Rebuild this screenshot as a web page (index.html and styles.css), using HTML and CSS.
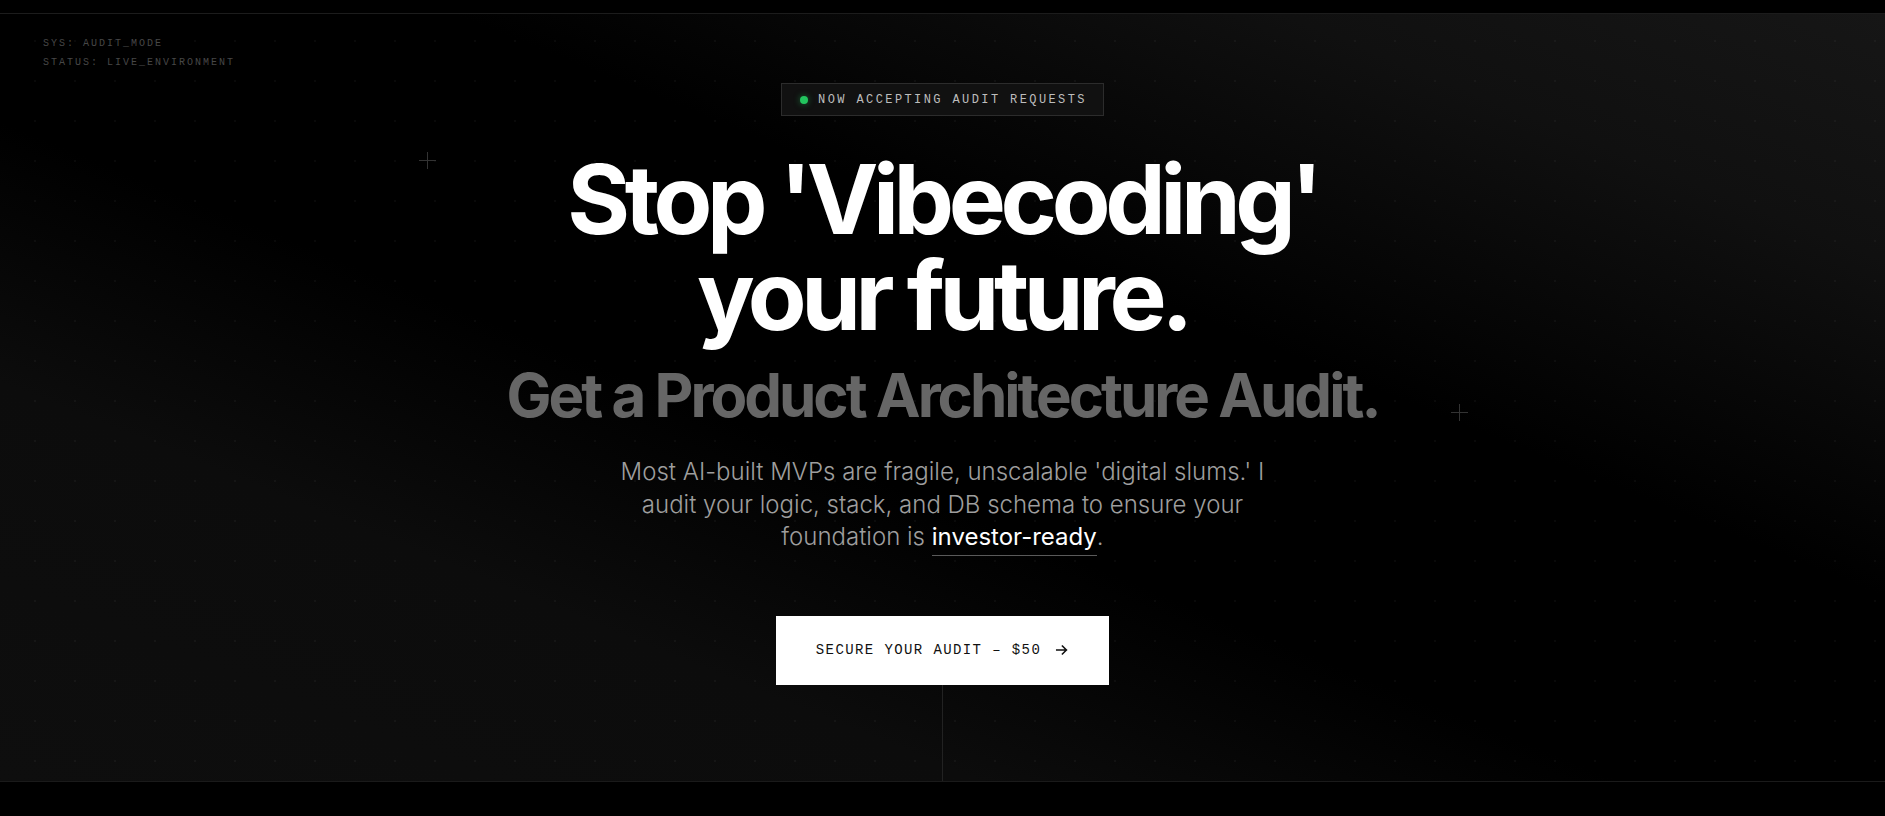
FILE: index.html
```html
<!DOCTYPE html>
<html lang="en">
<head>
<meta charset="utf-8">
<title>Product Architecture Audit</title>
<link rel="stylesheet" href="styles.css">
</head>
<body>
  <div class="topbar"></div>
  <section class="hero">
    <div class="sys-meta">
      <div>SYS: AUDIT_MODE</div>
      <div>STATUS: LIVE_ENVIRONMENT</div>
    </div>

    <span class="cross cross-a"></span>
    <span class="cross cross-b"></span>

    <div class="hero-inner">
      <div class="badge">
        <span class="badge-dot"></span>
        <span>NOW ACCEPTING AUDIT REQUESTS</span>
      </div>

      <h1 class="headline">Stop 'Vibecoding'<br>your future.</h1>
      <h2 class="subheadline">Get a Product Architecture Audit.</h2>

      <p class="lede">Most AI-built MVPs are fragile, unscalable 'digital slums.' I audit your logic, stack, and DB schema to ensure your foundation is <span class="highlight">investor-ready</span>.</p>

      <a class="cta" href="#audit">
        <span>SECURE YOUR AUDIT – $50</span>
        <svg class="cta-arrow" viewBox="0 0 16 16" width="14" height="14" aria-hidden="true">
          <path d="M2 8h11M8.5 3.5 13 8l-4.5 4.5" fill="none" stroke="currentColor" stroke-width="1.8" stroke-linecap="square"/>
        </svg>
      </a>

      <div class="drop-line"></div>
    </div>
  </section>
</body>
</html>
```

FILE: styles.css
```css
* {
  box-sizing: border-box;
}

html,
body {
  margin: 0;
  padding: 0;
  background: #000;
}

body {
  font-family: Inter, "Noto Sans", sans-serif;
  color: #fff;
  height: 816px;
  overflow: hidden;
}

.topbar {
  height: 14px;
  border-bottom: 1px solid #1c1c1c;
}

.hero {
  position: relative;
  height: 768px;
  border-bottom: 1px solid #1a1a1a;
  background:
    radial-gradient(circle, rgba(255, 255, 255, 0.035) 1px, transparent 1.2px) 15px 7px / 40px 40px,
    linear-gradient(to top right, #0e0e0e 0%, #0c0c0c 26%, #000 43%, #000 62%, #101010 84%, #161616 100%);
  overflow: hidden;
}

.sys-meta {
  position: absolute;
  left: 43px;
  top: 20px;
  font-family: "Liberation Mono", monospace;
  font-size: 10px;
  letter-spacing: 0.2em;
  line-height: 19px;
  color: #474747;
}

.cross {
  position: absolute;
  width: 17px;
  height: 17px;
}

.cross::before,
.cross::after {
  content: "";
  position: absolute;
  background: #333;
}

.cross::before {
  left: 8px;
  top: 0;
  width: 1px;
  height: 17px;
}

.cross::after {
  top: 8px;
  left: 0;
  height: 1px;
  width: 17px;
}

.cross-a {
  left: 419px;
  top: 138px;
}

.cross-b {
  left: 1451px;
  top: 390px;
}

.hero-inner {
  display: flex;
  flex-direction: column;
  align-items: center;
  padding-top: 69px;
  text-align: center;
}

.badge {
  display: flex;
  align-items: center;
  gap: 10px;
  height: 33px;
  padding: 0 16px 0 18px;
  border: 1px solid #2c2c2c;
  background: #111;
  font-family: "Liberation Mono", monospace;
  font-size: 12px;
  letter-spacing: 0.2em;
  color: #bdbdbd;
}

.badge-dot {
  width: 8px;
  height: 8px;
  border-radius: 50%;
  background: #22c55e;
  box-shadow: 0 0 6px rgba(34, 197, 94, 0.5);
}

.headline {
  margin: 35px 0 0;
  font-size: 96px;
  font-weight: 700;
  line-height: 1;
  letter-spacing: -0.056em;
  color: #fff;
}

.subheadline {
  margin: 22px 0 0;
  font-size: 60px;
  font-weight: 700;
  line-height: 1;
  letter-spacing: -0.05em;
  color: #666;
}

.lede {
  margin: 31px 0 0;
  max-width: 672px;
  font-size: 24px;
  font-weight: 300;
  line-height: 32.5px;
  color: #9e9e9e;
}

.highlight {
  color: #fff;
  font-weight: 400;
  padding-bottom: 4px;
  border-bottom: 1px solid #5a5a5a;
}

.cta {
  margin-top: 62px;
  display: flex;
  align-items: center;
  gap: 14px;
  height: 69px;
  padding: 0 40px;
  background: #fff;
  color: #111;
  text-decoration: none;
  font-family: "Liberation Mono", monospace;
  font-size: 14px;
  letter-spacing: 0.1em;
}

.cta-arrow {
  display: block;
}

.drop-line {
  width: 1px;
  height: 100px;
  background: #222;
}
```
